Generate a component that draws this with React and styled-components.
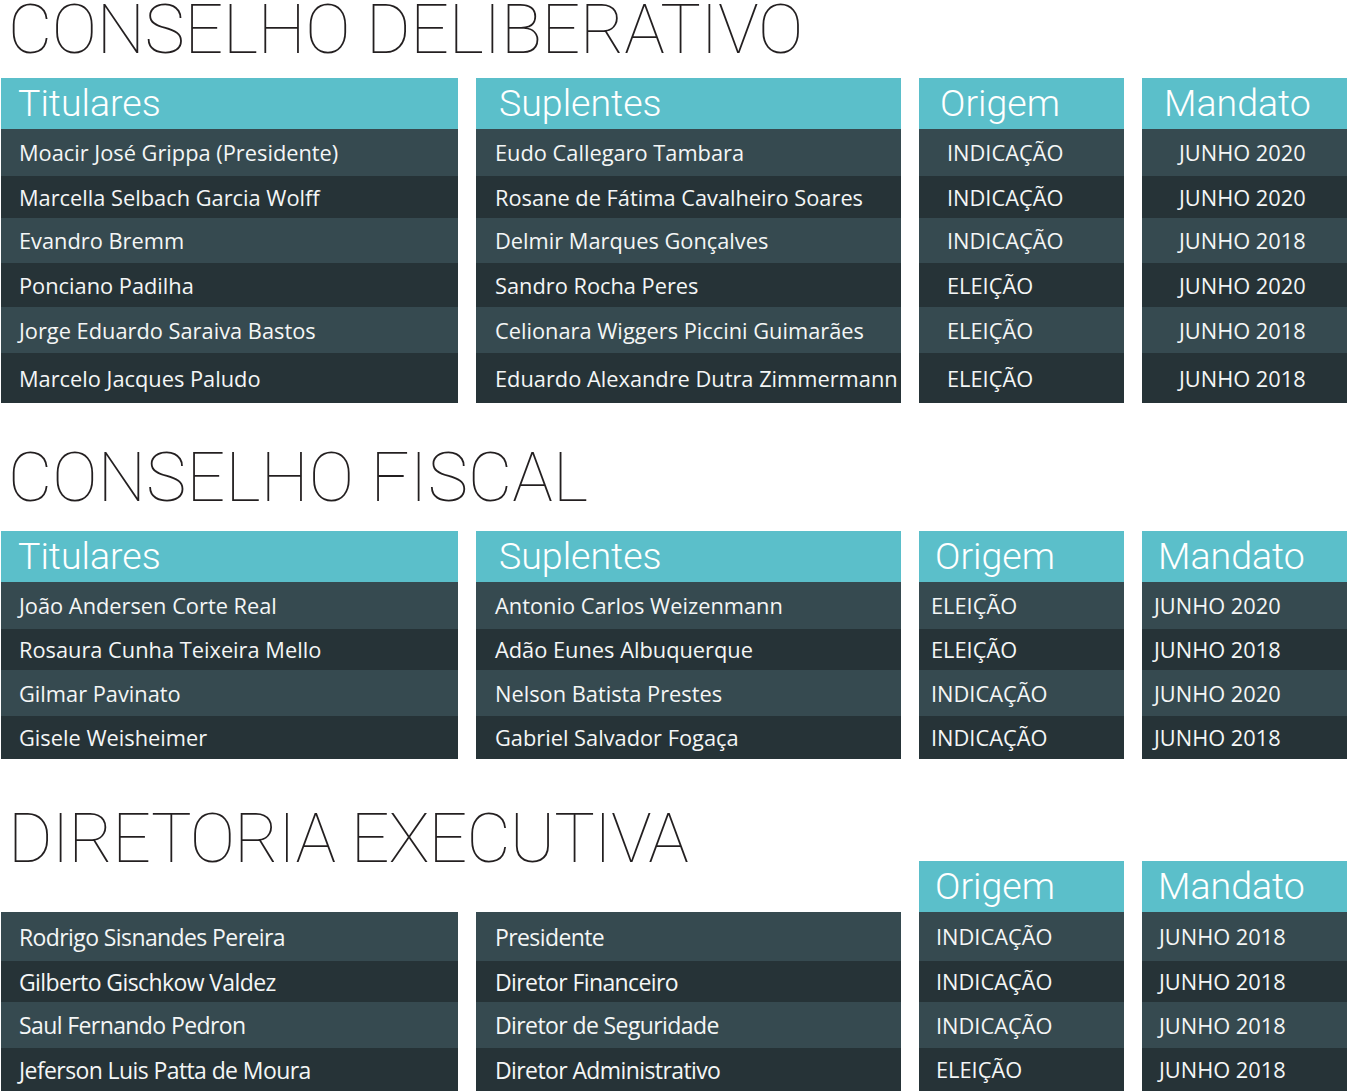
import React from "react";
import styled, { createGlobalStyle } from "styled-components";

const GlobalStyle = createGlobalStyle`
  body {
    margin: 0;
    background: #fff;
  }
`;

const Page = styled.div`
  width: 1347px;
  padding-left: 1px;
  box-sizing: border-box;
`;

const Title = styled.h1`
  margin: 0;
  height: ${(p) => p.$height}px;
  padding-top: ${(p) => p.$top}px;
  box-sizing: border-box;
  padding-left: 7px;
  font-family: Roboto, "Liberation Sans", sans-serif;
  font-weight: 100;
  font-size: 68px;
  line-height: 0.75;
  color: #231f20;
  white-space: nowrap;
  letter-spacing: ${(p) => p.$spacing}px;
`;

const Grid = styled.div`
  display: grid;
  grid-template-columns: 457px 425px 205px 205px;
  column-gap: 18px;
`;

const Column = styled.div`
  display: flex;
  flex-direction: column;
`;

const Header = styled.div`
  height: 51px;
  background: ${(p) => (p.$blank ? "transparent" : "#5bbfca")};
  color: #fff;
  font-family: Roboto, "Liberation Sans", sans-serif;
  font-weight: 300;
  font-size: 37.5px;
  line-height: 51px;
  padding-left: ${(p) => p.$indent}px;
  white-space: nowrap;
  overflow: hidden;
`;

const Cell = styled.div`
  height: ${(p) => p.$h}px;
  background: ${(p) => (p.$odd ? "#263337" : "#364a50")};
  color: #f4f6f6;
  font-family: "Open Sans", "Liberation Sans", sans-serif;
  font-size: ${(p) => (p.$tight ? "23px" : "21.8px")};
  letter-spacing: ${(p) => (p.$tight ? "-0.6px" : "0")};
  display: flex;
  align-items: center;
  padding-left: ${(p) => p.$indent}px;
  white-space: nowrap;
  overflow: hidden;
`;

const sections = [
  {
    title: "CONSELHO DELIBERATIVO",
    titleHeight: 78,
    titleTop: 5,
    spacing: -0.3,
    heights: [47, 42, 45, 44, 46, 50],
    columns: [
      {
        header: "Titulares",
        hIndent: 17,
        indent: 18,
        items: [
          "Moacir José Grippa (Presidente)",
          "Marcella Selbach Garcia Wolff",
          " Evandro Bremm",
          "Ponciano Padilha",
          "Jorge Eduardo Saraiva Bastos",
          "Marcelo Jacques Paludo",
        ],
      },
      {
        header: "Suplentes",
        hIndent: 23,
        indent: 19,
        items: [
          "Eudo Callegaro Tambara",
          "Rosane de Fátima Cavalheiro Soares",
          "Delmir Marques Gonçalves",
          "Sandro Rocha Peres",
          "Celionara Wiggers Piccini Guimarães",
          "Eduardo Alexandre Dutra Zimmermann",
        ],
      },
      {
        header: "Origem",
        hIndent: 21,
        indent: 28,
        items: ["INDICAÇÃO", "INDICAÇÃO", "INDICAÇÃO", "ELEIÇÃO", "ELEIÇÃO", "ELEIÇÃO"],
      },
      {
        header: "Mandato",
        hIndent: 22,
        indent: 37,
        items: ["JUNHO 2020", "JUNHO 2020", "JUNHO 2018", "JUNHO 2020", "JUNHO 2018", "JUNHO 2018"],
      },
    ],
  },
  {
    title: "CONSELHO FISCAL",
    titleHeight: 128,
    titleTop: 50,
    spacing: 0.2,
    heights: [47, 41, 46, 43],
    columns: [
      {
        header: "Titulares",
        hIndent: 17,
        indent: 18,
        items: [
          "João Andersen Corte Real",
          "Rosaura Cunha Teixeira Mello",
          "Gilmar Pavinato",
          "Gisele Weisheimer",
        ],
      },
      {
        header: "Suplentes",
        hIndent: 23,
        indent: 19,
        items: [
          "Antonio Carlos Weizenmann",
          "Adão Eunes Albuquerque",
          "Nelson Batista Prestes",
          "Gabriel Salvador Fogaça",
        ],
      },
      {
        header: "Origem",
        hIndent: 16,
        indent: 12,
        items: ["ELEIÇÃO", "ELEIÇÃO", "INDICAÇÃO", "INDICAÇÃO"],
      },
      {
        header: "Mandato",
        hIndent: 16,
        indent: 12,
        items: ["JUNHO 2020", "JUNHO 2018", "JUNHO 2020", "JUNHO 2018"],
      },
    ],
  },
  {
    title: "DIRETORIA EXECUTIVA",
    titleHeight: 102,
    titleTop: 55,
    spacing: -0.8,
    tight: true,
    heights: [49, 41, 46, 43],
    columns: [
      {
        blank: true,
        indent: 18,
        items: [
          "Rodrigo Sisnandes Pereira",
          "Gilberto Gischkow Valdez",
          "Saul Fernando Pedron",
          "Jeferson Luis Patta de Moura",
        ],
      },
      {
        blank: true,
        indent: 19,
        items: ["Presidente", "Diretor Financeiro", "Diretor de Seguridade", "Diretor Administrativo"],
      },
      {
        header: "Origem",
        hIndent: 16,
        indent: 17,
        items: ["INDICAÇÃO", "INDICAÇÃO", "INDICAÇÃO", "ELEIÇÃO"],
      },
      {
        header: "Mandato",
        hIndent: 16,
        indent: 17,
        items: ["JUNHO 2018", "JUNHO 2018", "JUNHO 2018", "JUNHO 2018"],
      },
    ],
  },
];

const App = () => (
  <Page>
    <GlobalStyle />
    {sections.map((s) => (
      <section key={s.title}>
        <Title $height={s.titleHeight} $top={s.titleTop} $spacing={s.spacing}>
          {s.title}
        </Title>
        <Grid>
          {s.columns.map((col, ci) => (
            <Column key={ci}>
              <Header $blank={col.blank} $indent={col.hIndent}>
                {col.header}
              </Header>
              {col.items.map((item, i) => (
                <Cell
                  key={i}
                  $h={s.heights[i]}
                  $odd={i % 2 === 1}
                  $indent={col.indent}
                  $tight={s.tight && ci < 2}
                >
                  {item}
                </Cell>
              ))}
            </Column>
          ))}
        </Grid>
      </section>
    ))}
  </Page>
);

export default App;
